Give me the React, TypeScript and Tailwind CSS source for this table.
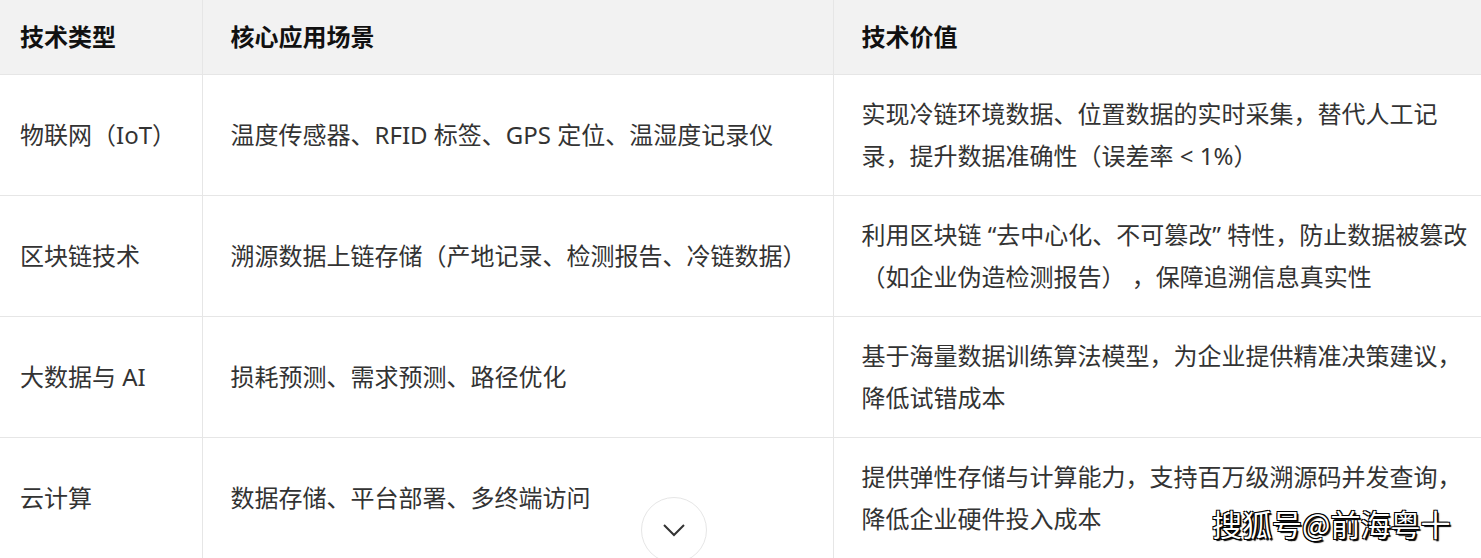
import React from 'react';

type Row = { type: string; scene: string; value: string };

const rows: Row[] = [
  {
    type: '物联网（IoT）',
    scene: '温度传感器、RFID 标签、GPS 定位、温湿度记录仪',
    value: '实现冷链环境数据、位置数据的实时采集，替代人工记录，提升数据准确性（误差率 < 1%）',
  },
  {
    type: '区块链技术',
    scene: '溯源数据上链存储（产地记录、检测报告、冷链数据）',
    value: '利用区块链 “去中心化、不可篡改” 特性，防止数据被篡改（如企业伪造检测报告） ，保障追溯信息真实性',
  },
  {
    type: '大数据与 AI',
    scene: '损耗预测、需求预测、路径优化',
    value: '基于海量数据训练算法模型，为企业提供精准决策建议，降低试错成本',
  },
  {
    type: '云计算',
    scene: '数据存储、平台部署、多终端访问',
    value: '提供弹性存储与计算能力，支持百万级溯源码并发查询，降低企业硬件投入成本',
  },
];

const App: React.FC = () => {
  return (
    <div className="relative w-full h-[558px] overflow-hidden bg-white font-['Noto_Sans','Noto_Sans_CJK_SC',sans-serif] text-[24px] leading-[42px]">
      <table className="-ml-2 w-[1511px] table-fixed border-collapse">
        <colgroup>
          <col className="w-[210px]" />
          <col className="w-[631px]" />
          <col className="w-[670px]" />
        </colgroup>
        <thead>
          <tr className="bg-[#f2f2f2] border-b border-[#e6e6e6]">
            <th className="pl-7 pr-6 py-4 text-left font-bold text-[#111]">技术类型</th>
            <th className="pl-7 pr-6 py-4 text-left font-bold text-[#111] border-l border-[#e6e6e6]">核心应用场景</th>
            <th className="pl-7 pr-6 py-4 text-left font-bold text-[#111] border-l border-[#e6e6e6]">技术价值</th>
          </tr>
        </thead>
        <tbody>
          {rows.map((r) => (
            <tr key={r.type} className="border-b border-[#e6e6e6] text-[#333]">
              <td className="pl-7 pr-6 py-[18px] align-middle">{r.type}</td>
              <td className="pl-7 pr-6 py-[18px] align-middle border-l border-[#e6e6e6]">{r.scene}</td>
              <td className="pl-7 pr-6 py-[18px] align-middle border-l border-[#e6e6e6]">{r.value}</td>
            </tr>
          ))}
        </tbody>
      </table>

      {/* expand button */}
      <button className="absolute left-[641px] top-[497px] flex h-[66px] w-[66px] items-center justify-center rounded-full border border-[#e6e6e6] bg-white text-[#333]">
        <svg width="24" height="14" viewBox="0 0 24 14" fill="none" stroke="currentColor" strokeWidth="2">
          <path d="M2 2l10 10L22 2" />
        </svg>
      </button>

      {/* watermark */}
      <div className="absolute left-[1212px] top-[503px] text-[30px] leading-[40px] text-white font-['Noto_Sans_CJK_SC',sans-serif] [text-shadow:1px_1px_0_#000,-1px_-1px_0_#000,1px_-1px_0_#000,-1px_1px_0_#000,2px_2px_1px_#000]">
        搜狐号@前海粤十
      </div>
    </div>
  );
};

export default App;
